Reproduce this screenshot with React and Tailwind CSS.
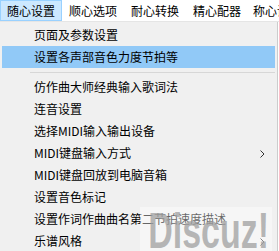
import React from "react";

const F = { fontFamily: '"Microsoft YaHei","Noto Sans CJK SC","Noto Sans",sans-serif' };

function Item({ label, active, sub }) {
  return (
    <div className={`relative flex items-center h-[22px] pl-[32px] text-[12px] text-black ${active ? "bg-[#91c9f7]" : ""}`}>
      <span className="whitespace-nowrap">{label}</span>
      {sub && (
        <svg className="absolute right-[10px] top-[8px]" width="5" height="8" viewBox="0 0 5 8">
          <path d="M0.5 0.5 L4 4 L0.5 7.5" fill="none" stroke="#333" strokeWidth="1" />
        </svg>
      )}
    </div>
  );
}

export default function App() {
  return (
    <div className="relative w-[279px] h-[251px] overflow-hidden bg-white" style={F}>
      <div className="flex h-[22px] bg-white border-b border-[#e5e5e5] text-[12px] text-black whitespace-nowrap">
        <div className="shrink-0 flex items-center justify-center w-[62px] h-[21px] bg-[#cce8ff] border border-[#99d1ff]">随心设置</div>
        <div className="shrink-0 flex items-center justify-center w-[62px]">顺心选项</div>
        <div className="shrink-0 flex items-center justify-center w-[62px]">耐心转换</div>
        <div className="shrink-0 flex items-center justify-center w-[62px]">精心配器</div>
        <div className="shrink-0 flex items-center pl-[5px]">称心设置</div>
      </div>
      <div className="w-[278px] bg-[#f0f0f0] border-r border-[#cccccc] px-[2px] pt-[2px] pb-[2px]">
        <Item label="页面及参数设置" />
        <Item label="设置各声部音色力度节拍等" active />
        <div className="h-[8px] flex items-center pl-[28px]">
          <div className="h-px w-full bg-[#d7d7d7]" />
        </div>
        <Item label="仿作曲大师经典输入歌词法" />
        <Item label="连音设置" />
        <Item label="选择MIDI输入输出设备" />
        <Item label="MIDI键盘输入方式" sub />
        <Item label="MIDI键盘回放到电脑音箱" />
        <Item label="设置音色标记" />
        <Item label="设置作词作曲曲名第二节拍速度描述" />
        <Item label="乐谱风格" sub />
      </div>
      <div className="absolute left-[140px] top-[207px] w-[132px] h-[44px] bg-white/40" />
      <div
        className="absolute left-[120px] top-[206px] w-[176px] text-center text-[50px] font-bold text-[#a0a0a0]/75 leading-none whitespace-nowrap scale-x-[0.68]"
        style={{ fontFamily: '"Liberation Sans",Arial,sans-serif' }}
      >
        Discuz!
      </div>
    </div>
  );
}
